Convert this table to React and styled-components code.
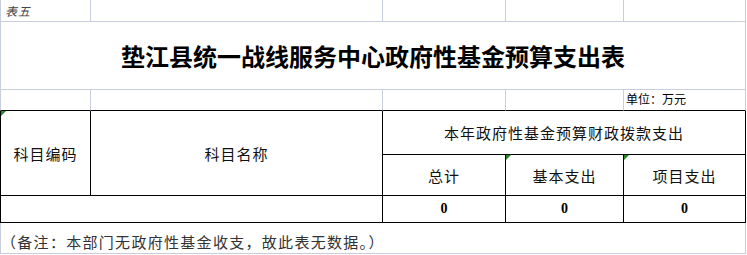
import styled, { createGlobalStyle, css } from 'styled-components';

const GRID = '#c8cedb';
const INK = '#000';

const GlobalStyle = createGlobalStyle`
	html, body {
		margin: 0;
		padding: 0;
		background: #fff;
	}
	body {
		font-family: 'Noto Sans CJK SC', 'Noto Sans', sans-serif;
		color: #111;
	}
`;

const Sheet = styled.div`
	display: grid;
	grid-template-columns: 91px 292px 123px 118px 122px;
	grid-template-rows: 22px 68px 21px 44px 41px 27px 31px;
	width: 746px;
`;

const Cell = styled.div`
	position: relative;
	box-sizing: border-box;
	display: flex;
	align-items: ${({ $valign }) => $valign || 'center'};
	justify-content: ${({ $align }) => $align || 'center'};
	grid-column: ${({ $col }) => $col || 'auto'};
	grid-row: ${({ $row }) => $row || 'auto'};
	border-right: 1px solid ${({ $r }) => $r || GRID};
	border-bottom: 1px solid ${({ $b }) => $b || GRID};
	border-left: ${({ $l }) => ($l ? `1px solid ${$l}` : 'none')};
	white-space: nowrap;
	overflow: hidden;

	${({ $flag }) =>
		$flag &&
		css`
			&::before {
				content: '';
				position: absolute;
				top: 0;
				left: 0;
				border-top: 5px solid #1e8a1e;
				border-right: 5px solid transparent;
			}
		`}
`;

const SheetLabel = styled.span`
	font-size: 12px;
	letter-spacing: 1px;
	color: #444;
	padding-left: 4px;
	font-style: italic;
`;

const Title = styled.h1`
	margin: 0;
	font-size: 24px;
	font-weight: 700;
	color: #000;
`;

const Unit = styled.span`
	font-size: 12px;
	color: #000;
	padding: 0 0 3px 2px;
`;

const HeadText = styled.span`
	font-size: 15px;
	letter-spacing: 1px;
	color: #111;
`;

const Amount = styled.span`
	font-family: 'Liberation Serif', serif;
	font-weight: 700;
	font-size: 14px;
	color: #000;
`;

const Note = styled.span`
	font-size: 15px;
	letter-spacing: 1.3px;
	color: #333;
	padding: 0 0 1px 0;
`;

const blank = ['2', '3', '4', '5'];

export default function App() {
	return (
		<>
			<GlobalStyle />
			<Sheet>
				<Cell $l={GRID} $align="flex-start">
					<SheetLabel>表五</SheetLabel>
				</Cell>
				{blank.map((c) => (
					<Cell key={`r1-${c}`} />
				))}

				<Cell $col="1 / 6" $l={GRID}>
					<Title>垫江县统一战线服务中心政府性基金预算支出表</Title>
				</Cell>

				<Cell $l={GRID} $b={INK} />
				<Cell $b={INK} />
				<Cell $b={INK} />
				<Cell $b={INK} />
				<Cell $b={INK} $align="flex-start" $valign="flex-end">
					<Unit>单位：万元</Unit>
				</Cell>

				<Cell $row="4 / 6" $l={INK} $r={INK} $b={INK} $flag>
					<HeadText>科目编码</HeadText>
				</Cell>
				<Cell $row="4 / 6" $r={INK} $b={INK}>
					<HeadText>科目名称</HeadText>
				</Cell>
				<Cell $col="3 / 6" $r={INK} $b={INK}>
					<HeadText>本年政府性基金预算财政拨款支出</HeadText>
				</Cell>
				<Cell $r={INK} $b={INK}>
					<HeadText>总计</HeadText>
				</Cell>
				<Cell $r={INK} $b={INK} $flag>
					<HeadText>基本支出</HeadText>
				</Cell>
				<Cell $r={INK} $b={INK} $flag>
					<HeadText>项目支出</HeadText>
				</Cell>

				<Cell $col="1 / 3" $l={INK} $r={INK} $b={INK} />
				<Cell $r={INK} $b={INK}>
					<Amount>0</Amount>
				</Cell>
				<Cell $r={INK} $b={INK}>
					<Amount>0</Amount>
				</Cell>
				<Cell $r={INK} $b={INK}>
					<Amount>0</Amount>
				</Cell>

				<Cell $col="1 / 6" $l={GRID} $align="flex-start" $valign="flex-end">
					<Note>（备注：本部门无政府性基金收支，故此表无数据。）</Note>
				</Cell>
			</Sheet>
		</>
	);
}
